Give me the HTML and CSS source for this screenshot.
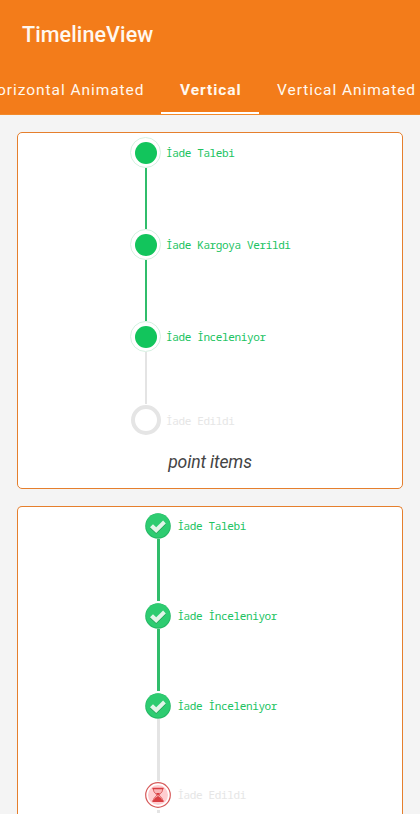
FILE: index.html
```
<!DOCTYPE html>
<html lang="tr">
<head>
<meta charset="utf-8">
<title>TimelineView</title>
<link rel="stylesheet" href="styles.css">
</head>
<body>
<svg class="defs" width="0" height="0">
  <symbol id="check" viewBox="0 0 26 26">
    <circle cx="13" cy="13" r="12.8" fill="#25b865"/>
    <circle cx="13" cy="12.6" r="12" fill="#2ecc71"/>
    <path d="M5 15.2 8 12.2l3.2 3.1 6.9-6.7 2.7 2.8-9.6 9.5z" fill="#27a35c"/>
    <path d="M5 14.2 8 11.2l3.2 3.1 6.9-6.7 2.7 2.8-9.6 9.5z" fill="#e2f5e9"/>
  </symbol>
  <symbol id="wait" viewBox="0 0 26 26">
    <circle cx="13" cy="13" r="12.3" fill="#fff" stroke="#d75a5a" stroke-width="1.2"/>
    <circle cx="13" cy="13" r="10" fill="#ffcdd0"/>
    <path d="M8.5 6.5h9v1.6c0 2.5-3.2 3.8-3.2 5s3.2 2.5 3.2 5v1.2h-9v-1.2c0-2.5 3.2-3.8 3.2-5s-3.2-2.5-3.2-5z" fill="#f9b6b8" stroke="#df6060" stroke-width="1"/>
    <path d="M7.4 5.8h11.2v1.5H7.4zM7.4 18.3h11.2v1.8H7.4zM9 18.5c0-2.4 3-3.5 4-4.7 1 1.2 4 2.3 4 4.7zM11 11h4l-2 3z" fill="#d93e42"/>
  </symbol>
</svg>
<header class="appbar">
  <h1>TimelineView</h1>
  <nav class="tabs">
    <a class="tab first">Horizontal Animated</a>
    <a class="tab active">Vertical</a>
    <a class="tab last">Vertical Animated</a>
  </nav>
</header>
<main>
  <section class="card points">
    <ol class="timeline">
      <li class="done"><i class="point"></i><span>İade Talebi</span></li>
      <li class="line"></li>
      <li class="done"><i class="point"></i><span>İade Kargoya Verildi</span></li>
      <li class="line"></li>
      <li class="done"><i class="point"></i><span>İade İnceleniyor</span></li>
      <li class="line pending short"></li>
      <li class="todo"><i class="point"></i><span>İade Edildi</span></li>
    </ol>
    <p class="caption">point items</p>
  </section>
  <section class="card icons">
    <ol class="timeline">
      <li class="done"><svg class="icon"><use href="#check"/></svg><span>İade Talebi</span></li>
      <li class="line"></li>
      <li class="done"><svg class="icon"><use href="#check"/></svg><span>İade İnceleniyor</span></li>
      <li class="line"></li>
      <li class="done"><svg class="icon"><use href="#check"/></svg><span>İade İnceleniyor</span></li>
      <li class="line pending"></li>
      <li class="todo"><svg class="icon"><use href="#wait"/></svg><span>İade Edildi</span></li>
      <li class="line pending rest"></li>
    </ol>
  </section>
</main>
</body>
</html>
```
FILE: styles.css
```
* { box-sizing: border-box; }
body { margin: 0; height: 814px; overflow: hidden; display: flex; flex-direction: column; background: #f4f4f4; font-family: Roboto, sans-serif; }
.defs { display: block; flex: none; }
.appbar { flex: none; height: 115px; background: #f37c1a; color: #fff8ef; overflow: hidden; border-bottom: 1px solid #f38a2a; }
h1 { margin: 0; padding: 21px 0 0 22px; height: 65px; font-size: 21.5px; line-height: 28px; font-weight: 500; letter-spacing: 0.1px; }
.tabs { display: flex; height: 50px; }
.tab { flex: none; padding-top: 14px; font-size: 15.5px; line-height: 22px; letter-spacing: 0.95px; white-space: nowrap; }
.first { width: 161px; display: flex; justify-content: flex-end; padding-right: 16.5px; }
.active { width: 98px; padding-left: 19px; font-weight: 700; border-bottom: 3px solid #fff; }
.last { padding-left: 18px; }
main { flex: 1; min-height: 0; padding: 17px 17px 0; display: flex; flex-direction: column; gap: 17px; }
.card { background: #fff; border: 1px solid #e57f2d; border-radius: 5px; }
.points { flex: none; height: 357px; }
.icons { flex: 1; min-height: 0; border-bottom: 0; border-radius: 5px 5px 0 0; overflow: hidden; }
.timeline { list-style: none; margin: 0; padding: 4px 0 0 112px; }
.timeline li { display: flex; align-items: center; }
.timeline span { font: 11px/14px "Droid Sans Mono", "Noto Sans Mono", "DejaVu Sans Mono", monospace; letter-spacing: -0.37px; white-space: pre; padding-top: 1px; }
.done { color: #20c35f; }
.todo { color: #e6e6e6; }
.points .point { width: 31px; height: 31px; border-radius: 50%; border: 1px solid #d5f1e1; margin-right: 5px; display: grid; place-items: center; }
.done .point::before { content: ""; width: 22px; height: 22px; border-radius: 50%; background: #12c55c; }
.points .todo .point { width: 30px; height: 30px; margin: 0 5px 0 1px; border: 4px solid #e5e5e5; }
.timeline .line { width: 2.5px; height: 61px; margin-left: 14.5px; background: #30bd6b; }
.timeline .pending { background: #e4e4e4; }
.timeline .short { height: 52px; margin-bottom: 1px; }
.caption { margin: 15px 0 0; text-align: center; font-size: 17.6px; letter-spacing: -0.15px; line-height: 25px; font-style: italic; color: #444; }
.icons .timeline { padding: 6px 0 0 127px; }
.icons .timeline span { padding-top: 0; }
.icon { width: 26px; height: 26px; margin-right: 6.4px; display: block; }
.icons .line { height: 62px; margin: 0 0 1.8px 12px; }
.icons .rest { height: 3px; margin: 2px 0 0 12px; }
```
